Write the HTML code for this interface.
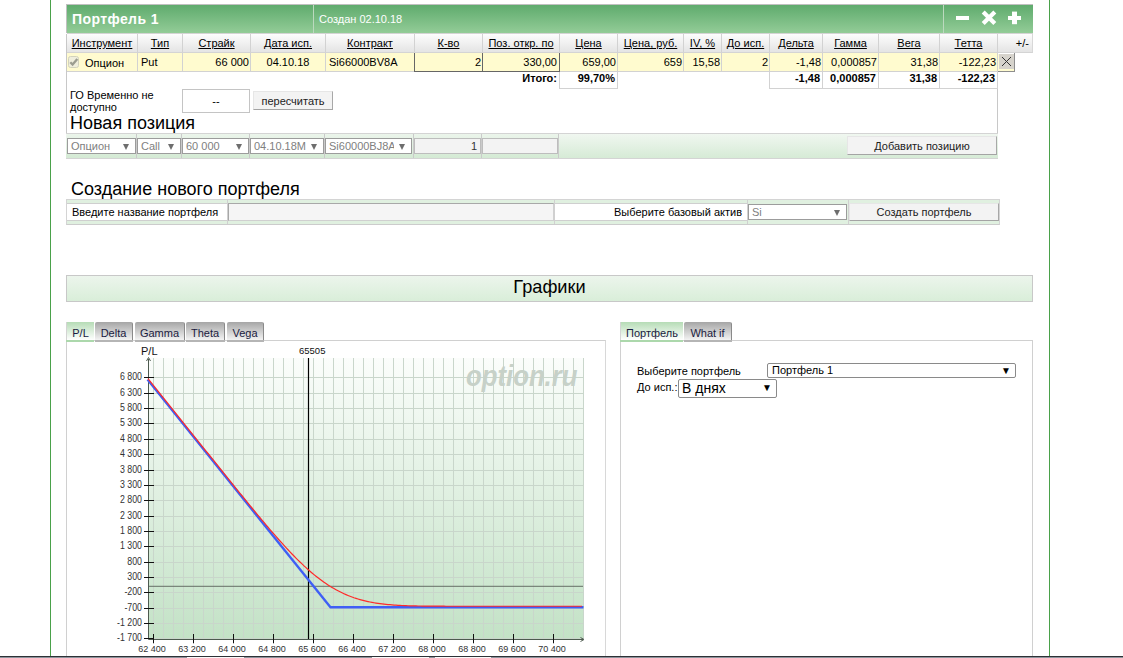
<!DOCTYPE html>
<html><head><meta charset="utf-8">
<style>
*{margin:0;padding:0;box-sizing:border-box}
html,body{width:1123px;height:658px;overflow:hidden;background:#fff;font-family:"Liberation Sans",sans-serif;color:#000}
.a{position:absolute}
.vl{position:absolute;width:1px}
.hl{position:absolute;height:1px}
.t{position:absolute;white-space:nowrap;font-size:11px;line-height:13px}
.u{text-decoration:underline}
.hc{position:absolute;top:34px;height:19px;background:linear-gradient(#fdfdfd,#e4e4e4);border-right:1px solid #d2d2d2;border-bottom:1px solid #d4d4d4;font-size:11px;line-height:19px;text-align:center;white-space:nowrap}
.hc span{text-decoration:underline}
.yc{position:absolute;top:53px;height:19px;background:#fffbcf;border-right:1px solid #d2d2d2;border-bottom:1px solid #d2d2d2;font-size:11px;line-height:18px;white-space:nowrap;padding:0 3px}
.ic{position:absolute;top:72px;height:17px;border-right:1px solid #d2d2d2;border-bottom:1px solid #d2d2d2;font-size:11px;line-height:13px;font-weight:bold;text-align:right;white-space:nowrap;padding:0 2px}
.r{text-align:right}
.yc.r{padding-right:1px}
.c{text-align:center}
.sel{position:absolute;height:16px;border:1px solid #9c9c9c;background:#fff;font-size:11px;line-height:14px;color:#808080;padding-left:3px;white-space:nowrap;overflow:hidden}
.sel i{position:absolute;right:0;top:0;width:17px;height:14px;text-align:center;background:#fff;font-style:normal;font-size:10px;color:#6e6e6e}
.sel i:before{content:"";position:absolute;left:4.5px;top:4.5px;border-left:3.5px solid transparent;border-right:3.5px solid transparent;border-top:6px solid #6e6e6e}
.btn{position:absolute;background:#f3f3f3;border:1px solid #e6e6e6;border-bottom-color:#a4a4a4;border-right-color:#a8a8a8;font-size:11px;text-align:center;white-space:nowrap;color:#222}
.tab{position:absolute;top:322px;height:18px;font-size:11px;line-height:21px;text-align:center;background:linear-gradient(#aaaaaa,#f3f3f3);border-right:1px solid #8a8a8a;border-top:1px solid #a8a8a8;border-radius:2px 2px 0 0;color:#1a1a40}
.tab:after{content:"";position:absolute;left:0;right:-1px;bottom:-2px;height:2px;background:#b5b5b5}
.tab.on{background:linear-gradient(#b6dcb6,#fff);border-right:0;border-top:0;border-left:1px solid #d4d4d4;border-radius:0;line-height:23px}
.tab.on:after{background:#acd8ac;left:-1px;right:0}
</style></head><body>
<!-- page green lines -->
<div class="vl" style="left:50px;top:0;height:656px;background:#4aa14a"></div>
<div class="vl" style="left:1049px;top:0;height:656px;background:#4aa14a"></div>

<!-- portfolio header -->
<div class="a" style="left:66px;top:4px;width:967px;height:29px;border:1px solid #c0c0c0;border-bottom:0;border-right:0;background:linear-gradient(#5fab6d,#93cc97)"></div>
<div class="vl" style="left:313px;top:5px;height:28px;background:#bcd9bf"></div>
<div class="vl" style="left:943px;top:5px;height:28px;background:#bcd9bf"></div>
<div class="t" style="left:72px;top:11px;font-size:14px;line-height:16px;font-weight:bold;color:#fff;letter-spacing:0.4px">Портфель 1</div>
<div class="t" style="left:319px;top:13px;font-size:11px;color:#fff">Создан 02.10.18</div>
<!-- icons -->
<svg class="a" style="left:950px;top:8px" width="80" height="22">
<rect x="6" y="8" width="13" height="4" fill="#fff"/>
<path d="M33.2 3.9 L44.8 15.6 M44.8 3.9 L33.2 15.6" stroke="#fff" stroke-width="4.2"/>
<rect x="58" y="8" width="13" height="4" fill="#fff"/>
<rect x="62" y="3.6" width="5" height="12.6" fill="#fff"/>
</svg>

<!-- container borders -->
<div class="vl" style="left:66px;top:34px;height:124px;background:#c8c8c8"></div>
<div class="vl" style="left:997px;top:72px;height:86px;background:#c8c8c8"></div>

<!-- header row -->
<div class="hl" style="left:67px;top:33px;width:966px;background:#d4d4d4"></div>
<div class="hc" style="left:67px;width:71px"><span>Инструмент</span></div>
<div class="hc" style="left:138px;width:45px"><span>Тип</span></div>
<div class="hc" style="left:183px;width:68px"><span>Страйк</span></div>
<div class="hc" style="left:251px;width:75px"><span>Дата исп.</span></div>
<div class="hc" style="left:326px;width:89px"><span>Контракт</span></div>
<div class="hc" style="left:415px;width:68px"><span>К-во</span></div>
<div class="hc" style="left:483px;width:77px"><span>Поз. откр. по</span></div>
<div class="hc" style="left:560px;width:58px"><span>Цена</span></div>
<div class="hc" style="left:618px;width:66px"><span>Цена, руб.</span></div>
<div class="hc" style="left:684px;width:38px"><span>IV, %</span></div>
<div class="hc" style="left:722px;width:48px"><span>До исп.</span></div>
<div class="hc" style="left:770px;width:53px"><span>Дельта</span></div>
<div class="hc" style="left:823px;width:56px"><span>Гамма</span></div>
<div class="hc" style="left:879px;width:61px"><span>Вега</span></div>
<div class="hc" style="left:940px;width:58px"><span>Тетта</span></div>
<div class="hc" style="left:998px;width:35px;border-right-color:#d8d8d8;text-align:right;padding-right:3px">+/-</div>
<!-- yellow row -->
<div class="yc" style="left:67px;width:71px;padding-left:18px"><span style="position:relative;top:1px">Опцион</span></div>
<div class="a" style="left:67.5px;top:56px;width:11.5px;height:12px;border:1px solid #d2d2bc;border-radius:2.5px;background:#efeedc"></div>
<svg class="a" style="left:68px;top:56px" width="12" height="12"><path d="M2.3 6.2 L4.6 8.6 L9.3 3" stroke="#9c9d90" stroke-width="2.3" fill="none"/></svg>
<div class="yc" style="left:138px;width:45px">Put</div>
<div class="yc r" style="left:183px;width:68px">66 000</div>
<div class="yc c" style="left:251px;width:75px">04.10.18</div>
<div class="yc" style="left:326px;width:89px">Si66000BV8A</div>
<div class="yc r" style="left:414px;width:68px;border-left:1px solid #666;border-bottom:1px solid #666;border-right:0">2</div>
<div class="yc r" style="left:482px;width:78px;border-left:1px solid #666;border-bottom:1px solid #666;border-right:1px solid #666;padding-right:2px">330,00</div>
<div class="yc r" style="left:560px;width:58px">659,00</div>
<div class="yc r" style="left:618px;width:66px">659</div>
<div class="yc r" style="left:684px;width:38px">15,58</div>
<div class="yc r" style="left:722px;width:48px">2</div>
<div class="yc r" style="left:770px;width:53px">-1,48</div>
<div class="yc r" style="left:823px;width:56px">0,000857</div>
<div class="yc r" style="left:879px;width:61px">31,38</div>
<div class="yc r" style="left:940px;width:58px">-122,23</div>
<div class="a" style="left:998px;top:53px;width:17px;height:19px;background:#fffbd0;border-right:1px solid #8e8e8e;border-bottom:1px solid #8e8e8e"></div>
<div class="a" style="left:998px;top:53px;width:16px;height:1px;background:#fff"></div>
<div class="a" style="left:999px;top:54px;width:15px;height:15px;background:#d6d3cc"></div>
<svg class="a" style="left:998px;top:53px" width="17" height="18"><path d="M4 4 L13 13 M13 4 L4 13" stroke="#333" stroke-width="1.1" shape-rendering="crispEdges"/></svg>

<!-- itogo row -->
<div class="t" style="left:501px;top:72px;width:56px;text-align:right;font-weight:bold">Итого:</div>
<div class="ic" style="left:559px;width:59px;border-left:1px solid #d2d2d2">99,70%</div>
<div class="ic" style="left:769px;width:54px;border-left:1px solid #d2d2d2">-1,48</div>
<div class="ic" style="left:823px;width:56px">0,000857</div>
<div class="ic" style="left:879px;width:61px">31,38</div>
<div class="ic" style="left:940px;width:58px">-122,23</div>

<!-- GO row -->
<div class="t" style="left:70px;top:89px;line-height:12px">ГО Временно не<br>доступно</div>
<div class="a" style="left:182px;top:89px;width:68px;height:24px;border:1px solid #c4c4c4;background:#fff;font-size:11px;line-height:22px;text-align:center">--</div>
<div class="btn" style="left:253px;top:91px;width:80px;height:19px;line-height:19px">пересчитать</div>
<div class="t" style="left:70px;top:112px;font-size:18px;line-height:22px">Новая позиция</div>

<!-- new position row -->
<div class="a" style="left:66px;top:133px;width:932px;height:26px;background:linear-gradient(#f0f7f0,#d6ebd6);border-top:1px solid #d4d4d4;border-bottom:1px solid #d4d4d4"></div>
<div class="a" style="left:67px;top:134px;width:491px;height:24px;background:linear-gradient(#ebf5eb,#d4ead4)"></div>
<div class="vl" style="left:136px;top:134px;height:24px;background:#cacaca"></div>
<div class="vl" style="left:181px;top:134px;height:24px;background:#cacaca"></div>
<div class="vl" style="left:249px;top:134px;height:24px;background:#cacaca"></div>
<div class="vl" style="left:324px;top:134px;height:24px;background:#cacaca"></div>
<div class="vl" style="left:413px;top:134px;height:24px;background:#cacaca"></div>
<div class="vl" style="left:481px;top:134px;height:24px;background:#cacaca"></div>
<div class="vl" style="left:558px;top:134px;height:24px;background:#cacaca"></div>
<div class="sel" style="left:67px;top:138px;width:69px">Опцион<i></i></div>
<div class="sel" style="left:137px;top:138px;width:44px">Call<i></i></div>
<div class="sel" style="left:182px;top:138px;width:67px">60 000<i></i></div>
<div class="sel" style="left:250px;top:138px;width:74px">04.10.18М<i></i></div>
<div class="sel" style="left:325px;top:138px;width:87px">Si60000BJ8A<i></i></div>
<div class="a" style="left:414px;top:138px;width:67px;height:16px;border:1px solid #bdbdbd;background:#f3f3f3;font-size:11px;line-height:14px;text-align:right;padding-right:3px;color:#333">1</div>
<div class="a" style="left:482px;top:138px;width:76px;height:16px;border:1px solid #bdbdbd;background:#f3f3f3"></div>
<div class="btn" style="left:847px;top:136px;width:150px;height:19px;line-height:18px">Добавить позицию</div>

<!-- create portfolio -->
<div class="t" style="left:71px;top:179px;font-size:18px;line-height:21px">Создание нового портфеля</div>
<div class="a" style="left:66px;top:199px;width:934px;height:26px;background:#e0f0e0;border:1px solid #d4d4d4;border-bottom-color:#cccccc"></div>
<div class="a" style="left:67px;top:203px;width:160px;height:18px;background:#fff;border-top:1px solid #cfcfcf;border-bottom:1px solid #cfcfcf;font-size:11px;line-height:16px;padding-left:5px">Введите название портфеля</div>
<div class="vl" style="left:227px;top:200px;height:24px;background:#d0d0d0"></div>
<div class="a" style="left:228px;top:203px;width:326px;height:18px;border:1px solid #a8a8a8;border-right-color:#d0d0d0;border-bottom-color:#d0d0d0;background:#f5f5f5"></div>
<div class="vl" style="left:554px;top:200px;height:24px;background:#d0d0d0"></div>
<div class="a" style="left:555px;top:203px;width:192px;height:18px;background:#fff;border-top:1px solid #cfcfcf;border-bottom:1px solid #cfcfcf;font-size:11px;line-height:16px;text-align:right;padding-right:5px">Выберите базовый актив</div>
<div class="vl" style="left:747px;top:200px;height:24px;background:#d0d0d0"></div>
<div class="sel" style="left:748px;top:204px;width:99px">Si<i></i></div>
<div class="vl" style="left:848px;top:200px;height:24px;background:#d0d0d0"></div>
<div class="btn" style="left:849px;top:203px;width:150px;height:18px;line-height:17px">Создать портфель</div>

<!-- charts bar -->
<div class="a" style="left:66px;top:275px;width:967px;height:27px;border:1px solid #c8c8c8;background:linear-gradient(#ecf5ec,#d9eed9);font-size:18.2px;line-height:22px;text-align:center">Графики</div>

<!-- left chart panel -->
<div class="a" style="left:66px;top:340px;width:540px;height:330px;border:1px solid #d0d0d0;border-right-color:#d8d8d8"></div>
<div class="tab on" style="left:66px;width:28px">P/L</div>
<div class="tab" style="left:95px;width:38px">Delta</div>
<div class="tab" style="left:135px;width:50px">Gamma</div>
<div class="tab" style="left:186px;width:39px">Theta</div>
<div class="tab" style="left:227px;width:37px">Vega</div>

<!--CHART-->
<svg class="a" style="left:0;top:0" width="1123" height="658">
<defs><linearGradient id="pg" x1="0" y1="0" x2="0" y2="1"><stop offset="0" stop-color="#fbfdfb"/><stop offset="1" stop-color="#c3e2c6"/></linearGradient></defs>
<rect x="148" y="358" width="435" height="281" fill="url(#pg)"/>
<path d="M153.5 358V639M163.5 358V639M173.5 358V639M183.5 358V639M193.5 358V639M203.5 358V639M213.5 358V639M223.5 358V639M233.5 358V639M243.5 358V639M253.5 358V639M263.5 358V639M273.5 358V639M283.5 358V639M293.5 358V639M303.5 358V639M313.5 358V639M323.5 358V639M333.5 358V639M343.5 358V639M353.5 358V639M363.5 358V639M373.5 358V639M383.5 358V639M393.5 358V639M403.5 358V639M413.5 358V639M423.5 358V639M433.5 358V639M443.5 358V639M453.5 358V639M463.5 358V639M473.5 358V639M483.5 358V639M493.5 358V639M503.5 358V639M513.5 358V639M523.5 358V639M533.5 358V639M543.5 358V639M553.5 358V639M563.5 358V639M573.5 358V639M583.5 358V639M148 638.50H583M148 623.50H583M148 608.50H583M148 592.50H583M148 577.50H583M148 562.50H583M148 546.50H583M148 531.50H583M148 516.50H583M148 500.50H583M148 485.50H583M148 470.50H583M148 454.50H583M148 439.50H583M148 423.50H583M148 408.50H583M148 393.50H583M148 377.50H583" stroke="#c9d6cb" stroke-width="1" fill="none"/>
<path d="M148 586.3H583" stroke="#667066" stroke-width="1"/>
<text x="466" y="385.5" textLength="111.5" lengthAdjust="spacingAndGlyphs" font-family="Liberation Sans" font-weight="bold" font-style="italic" font-size="29.5" fill="#c7d1c8">option.ru</text>
<path d="M148.5 359V639.5H583" stroke="#4d5a4f" stroke-width="1" fill="none"/>
<path d="M146.5 361L148.5 357.5L150.5 361M580.5 637.5L584 639.5L580.5 641.5" stroke="#4d5a4f" stroke-width="1" fill="none"/>
<text x="142" y="641.50" text-anchor="end" font-family="Liberation Sans" font-size="10" fill="#333" transform="translate(142 0) scale(0.88 1) translate(-142 0)">-1 700</text>
<text x="142" y="626.50" text-anchor="end" font-family="Liberation Sans" font-size="10" fill="#333" transform="translate(142 0) scale(0.88 1) translate(-142 0)">-1 200</text>
<text x="142" y="611.50" text-anchor="end" font-family="Liberation Sans" font-size="10" fill="#333" transform="translate(142 0) scale(0.88 1) translate(-142 0)">-700</text>
<text x="142" y="595.50" text-anchor="end" font-family="Liberation Sans" font-size="10" fill="#333" transform="translate(142 0) scale(0.88 1) translate(-142 0)">-200</text>
<text x="142" y="580.50" text-anchor="end" font-family="Liberation Sans" font-size="10" fill="#333" transform="translate(142 0) scale(0.88 1) translate(-142 0)">300</text>
<text x="142" y="565.50" text-anchor="end" font-family="Liberation Sans" font-size="10" fill="#333" transform="translate(142 0) scale(0.88 1) translate(-142 0)">800</text>
<text x="142" y="549.50" text-anchor="end" font-family="Liberation Sans" font-size="10" fill="#333" transform="translate(142 0) scale(0.88 1) translate(-142 0)">1 300</text>
<text x="142" y="534.50" text-anchor="end" font-family="Liberation Sans" font-size="10" fill="#333" transform="translate(142 0) scale(0.88 1) translate(-142 0)">1 800</text>
<text x="142" y="519.50" text-anchor="end" font-family="Liberation Sans" font-size="10" fill="#333" transform="translate(142 0) scale(0.88 1) translate(-142 0)">2 300</text>
<text x="142" y="503.50" text-anchor="end" font-family="Liberation Sans" font-size="10" fill="#333" transform="translate(142 0) scale(0.88 1) translate(-142 0)">2 800</text>
<text x="142" y="488.50" text-anchor="end" font-family="Liberation Sans" font-size="10" fill="#333" transform="translate(142 0) scale(0.88 1) translate(-142 0)">3 300</text>
<text x="142" y="473.50" text-anchor="end" font-family="Liberation Sans" font-size="10" fill="#333" transform="translate(142 0) scale(0.88 1) translate(-142 0)">3 800</text>
<text x="142" y="457.50" text-anchor="end" font-family="Liberation Sans" font-size="10" fill="#333" transform="translate(142 0) scale(0.88 1) translate(-142 0)">4 300</text>
<text x="142" y="442.50" text-anchor="end" font-family="Liberation Sans" font-size="10" fill="#333" transform="translate(142 0) scale(0.88 1) translate(-142 0)">4 800</text>
<text x="142" y="426.50" text-anchor="end" font-family="Liberation Sans" font-size="10" fill="#333" transform="translate(142 0) scale(0.88 1) translate(-142 0)">5 300</text>
<text x="142" y="411.50" text-anchor="end" font-family="Liberation Sans" font-size="10" fill="#333" transform="translate(142 0) scale(0.88 1) translate(-142 0)">5 800</text>
<text x="142" y="396.50" text-anchor="end" font-family="Liberation Sans" font-size="10" fill="#333" transform="translate(142 0) scale(0.88 1) translate(-142 0)">6 300</text>
<text x="142" y="380.50" text-anchor="end" font-family="Liberation Sans" font-size="10" fill="#333" transform="translate(142 0) scale(0.88 1) translate(-142 0)">6 800</text>
<text x="152.0" y="652.2" text-anchor="middle" font-family="Liberation Sans" font-size="9.5" fill="#333" transform="translate(152.0 0) scale(0.95 1) translate(-152.0 0)">62 400</text>
<text x="192.0" y="652.2" text-anchor="middle" font-family="Liberation Sans" font-size="9.5" fill="#333" transform="translate(192.0 0) scale(0.95 1) translate(-192.0 0)">63 200</text>
<text x="232.0" y="652.2" text-anchor="middle" font-family="Liberation Sans" font-size="9.5" fill="#333" transform="translate(232.0 0) scale(0.95 1) translate(-232.0 0)">64 000</text>
<text x="272.0" y="652.2" text-anchor="middle" font-family="Liberation Sans" font-size="9.5" fill="#333" transform="translate(272.0 0) scale(0.95 1) translate(-272.0 0)">64 800</text>
<text x="312.0" y="652.2" text-anchor="middle" font-family="Liberation Sans" font-size="9.5" fill="#333" transform="translate(312.0 0) scale(0.95 1) translate(-312.0 0)">65 600</text>
<text x="352.0" y="652.2" text-anchor="middle" font-family="Liberation Sans" font-size="9.5" fill="#333" transform="translate(352.0 0) scale(0.95 1) translate(-352.0 0)">66 400</text>
<text x="392.0" y="652.2" text-anchor="middle" font-family="Liberation Sans" font-size="9.5" fill="#333" transform="translate(392.0 0) scale(0.95 1) translate(-392.0 0)">67 200</text>
<text x="432.0" y="652.2" text-anchor="middle" font-family="Liberation Sans" font-size="9.5" fill="#333" transform="translate(432.0 0) scale(0.95 1) translate(-432.0 0)">68 000</text>
<text x="472.0" y="652.2" text-anchor="middle" font-family="Liberation Sans" font-size="9.5" fill="#333" transform="translate(472.0 0) scale(0.95 1) translate(-472.0 0)">68 800</text>
<text x="512.0" y="652.2" text-anchor="middle" font-family="Liberation Sans" font-size="9.5" fill="#333" transform="translate(512.0 0) scale(0.95 1) translate(-512.0 0)">69 600</text>
<text x="552.0" y="652.2" text-anchor="middle" font-family="Liberation Sans" font-size="9.5" fill="#333" transform="translate(552.0 0) scale(0.95 1) translate(-552.0 0)">70 400</text>
<path d="M144 638.50H154M144 623.50H154M144 608.50H154M144 592.50H154M144 577.50H154M144 562.50H154M144 546.50H154M144 531.50H154M144 516.50H154M144 500.50H154M144 485.50H154M144 470.50H154M144 454.50H154M144 439.50H154M144 423.50H154M144 408.50H154M144 393.50H154M144 377.50H154M153.5 634V643.3M193.5 634V643.3M233.5 634V643.3M273.5 634V643.3M313.5 634V643.3M353.5 634V643.3M393.5 634V643.3M433.5 634V643.3M473.5 634V643.3M513.5 634V643.3M553.5 634V643.3" stroke="#111" stroke-width="1" fill="none"/>
<path d="M308.5 358V639" stroke="#000" stroke-width="1.2"/>
<text x="299" y="353.5" font-family="Liberation Sans" font-size="9.5" fill="#111">65505</text>
<text x="141" y="355" font-family="Liberation Sans" font-size="11" fill="#111">P/L</text>
<path d="M147.5 379.63L330.5 607.26H583.5" stroke="#3f5ff5" stroke-width="2.3" fill="none" stroke-linejoin="miter"/>
<path d="M148.0 378.63L150.0 381.13L152.0 383.62L154.0 386.12L156.0 388.62L158.0 391.11L160.0 393.61L162.0 396.10L164.0 398.60L166.0 401.10L168.0 403.59L170.0 406.09L172.0 408.58L174.0 411.08L176.0 413.58L178.0 416.07L180.0 418.57L182.0 421.06L184.0 423.56L186.0 426.05L188.0 428.55L190.0 431.05L192.0 433.54L194.0 436.04L196.0 438.53L198.0 441.03L200.0 443.52L202.0 446.02L204.0 448.51L206.0 451.01L208.0 453.50L210.0 455.99L212.0 458.49L214.0 460.98L216.0 463.47L218.0 465.96L220.0 468.45L222.0 470.94L224.0 473.43L226.0 475.92L228.0 478.40L230.0 480.89L232.0 483.37L234.0 485.85L236.0 488.32L238.0 490.80L240.0 493.27L242.0 495.73L244.0 498.20L246.0 500.65L248.0 503.11L250.0 505.55L252.0 508.00L254.0 510.43L256.0 512.85L258.0 515.27L260.0 517.68L262.0 520.07L264.0 522.46L266.0 524.83L268.0 527.19L270.0 529.54L272.0 531.87L274.0 534.18L276.0 536.47L278.0 538.74L280.0 540.99L282.0 543.22L284.0 545.43L286.0 547.61L288.0 549.76L290.0 551.88L292.0 553.98L294.0 556.04L296.0 558.07L298.0 560.06L300.0 562.02L302.0 563.94L304.0 565.82L306.0 567.66L308.0 569.46L310.0 571.22L312.0 572.93L314.0 574.59L316.0 576.21L318.0 577.79L320.0 579.31L322.0 580.79L324.0 582.22L326.0 583.60L328.0 584.93L330.0 586.20L332.0 587.43L334.0 588.60L336.0 589.72L338.0 590.79L340.0 591.82L342.0 592.80L344.0 593.73L346.0 594.61L348.0 595.45L350.0 596.24L352.0 596.99L354.0 597.70L356.0 598.36L358.0 598.99L360.0 599.58L362.0 600.13L364.0 600.64L366.0 601.12L368.0 601.57L370.0 601.98L372.0 602.37L374.0 602.72L376.0 603.05L378.0 603.36L380.0 603.64L382.0 603.89L384.0 604.13L386.0 604.34L388.0 604.54L390.0 604.72L392.0 604.88L394.0 605.03L396.0 605.16L398.0 605.29L400.0 605.40L402.0 605.49L404.0 605.58L406.0 605.66L408.0 605.73L410.0 605.80L412.0 605.85L414.0 605.90L416.0 605.95L418.0 605.99L420.0 606.02L422.0 606.05L424.0 606.08L426.0 606.11L428.0 606.13L430.0 606.14L432.0 606.16L434.0 606.17L436.0 606.19L438.0 606.20L440.0 606.21L442.0 606.21L444.0 606.22L446.0 606.23L448.0 606.23L450.0 606.24L452.0 606.24L454.0 606.24L456.0 606.25L458.0 606.25L460.0 606.25L462.0 606.25L464.0 606.25L466.0 606.25L468.0 606.26L470.0 606.26L472.0 606.26L474.0 606.26L476.0 606.26L478.0 606.26L480.0 606.26L482.0 606.26L484.0 606.26L486.0 606.26L488.0 606.26L490.0 606.26L492.0 606.26L494.0 606.26L496.0 606.26L498.0 606.26L500.0 606.26L502.0 606.26L504.0 606.26L506.0 606.26L508.0 606.26L510.0 606.26L512.0 606.26L514.0 606.26L516.0 606.26L518.0 606.26L520.0 606.26L522.0 606.26L524.0 606.26L526.0 606.26L528.0 606.26L530.0 606.26L532.0 606.26L534.0 606.26L536.0 606.26L538.0 606.26L540.0 606.26L542.0 606.26L544.0 606.26L546.0 606.26L548.0 606.26L550.0 606.26L552.0 606.26L554.0 606.26L556.0 606.26L558.0 606.26L560.0 606.26L562.0 606.26L564.0 606.26L566.0 606.26L568.0 606.26L570.0 606.26L572.0 606.26L574.0 606.26L576.0 606.26L578.0 606.26L580.0 606.26L582.0 606.26" stroke="#ff2a2a" stroke-width="1.2" fill="none"/>
</svg>
<!--/CHART-->
<!-- right panel -->
<div class="a" style="left:620px;top:340px;width:413px;height:330px;border:1px solid #d0d0d0"></div>
<div class="tab on" style="left:620px;width:63px">Портфель</div>
<div class="tab" style="left:684px;width:48px">What if</div>
<div class="t" style="left:637px;top:365px">Выберите портфель</div>
<div class="a" style="left:767px;top:363px;width:249px;height:15px;border:1px solid #8a8a8a;border-radius:2px;background:#fff;font-size:11px;line-height:13px;padding-left:4px;white-space:nowrap">Портфель 1<span style="position:absolute;right:4px;font-size:10px">▼</span></div>
<div class="t" style="left:637px;top:381px">До исп.:</div>
<div class="a" style="left:678px;top:379px;width:99px;height:19px;border:1px solid #8a8a8a;border-radius:2px;background:#fff;font-size:14px;line-height:16px;padding-left:3px;white-space:nowrap">В днях<span style="position:absolute;right:4px;font-size:10px">▼</span></div>

<!-- bottom taskbar edge -->
<div class="a" style="left:0;top:656px;width:1123px;height:1px;background:#2e3136"></div><div class="a" style="left:0;top:657px;width:1123px;height:1px;background:#8e949c"></div><div class="a" style="left:187px;top:657px;width:57px;height:1px;background:#fafafa"></div><div class="a" style="left:372px;top:657px;width:57px;height:1px;background:#fafafa"></div><div class="a" style="left:435px;top:657px;width:56px;height:1px;background:#fafafa"></div>
</body></html>
